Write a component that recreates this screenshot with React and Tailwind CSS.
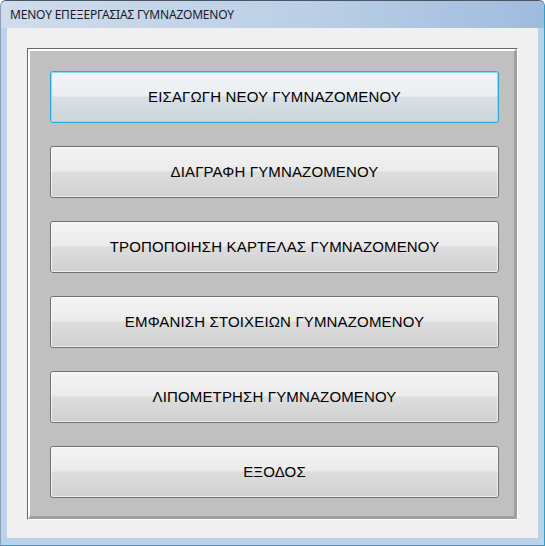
const ITEMS = [
  'ΕΙΣΑΓΩΓΗ ΝΕΟΥ ΓΥΜΝΑΖΟΜΕΝΟΥ',
  'ΔΙΑΓΡΑΦΗ ΓΥΜΝΑΖΟΜΕΝΟΥ',
  'ΤΡΟΠΟΠΟΙΗΣΗ ΚΑΡΤΕΛΑΣ ΓΥΜΝΑΖΟΜΕΝΟΥ',
  'ΕΜΦΑΝΙΣΗ ΣΤΟΙΧΕΙΩΝ ΓΥΜΝΑΖΟΜΕΝΟΥ',
  'ΛΙΠΟΜΕΤΡΗΣΗ ΓΥΜΝΑΖΟΜΕΝΟΥ',
  'ΕΞΟΔΟΣ',
];

function MenuButton({ label, focused }) {
  const shell = focused
    ? 'border-[#2aa7de] bg-[linear-gradient(to_bottom,#f1f4f6_0%,#eaeff2_48%,#d8e0e4_50%,#ccd6db_100%)]'
    : 'border-[#707070] bg-[linear-gradient(to_bottom,#f3f3f3_0%,#ebebeb_48%,#dddddd_50%,#d0d0d0_100%)]';
  return (
    <button
      className={`h-[52px] w-full rounded-[3px] border ${shell} text-[15px] tracking-[0.15px] text-black`}
      style={{ fontFamily: '"Liberation Sans", Arial, sans-serif' }}
    >
      <div className={`flex h-full w-full items-center justify-center rounded-[2px] border pt-[1px] ${focused ? 'border-[#8fd8f6]' : 'border-[#fcfcfc]/70'}`}>
        {label}
      </div>
    </button>
  );
}

export default function App() {
  return (
    <div
      className="flex h-[546px] w-[545px] flex-col overflow-hidden rounded-t-[6px] border-t border-l border-t-[#4a5666] border-l-[#8aa0b8] border-r border-r-[#2f9ec4] border-b border-b-[#2f9ec4] bg-[#bad2ec]"
      style={{ fontFamily: '"Segoe UI", "Noto Sans", "DejaVu Sans", sans-serif' }}
    >
      {/* title bar */}
      <div className="flex h-[27px] shrink-0 items-center bg-[linear-gradient(to_right,#cfdcec,#b9cee6_60%,#9fbbdd)] pl-[9px]">
        <span className="text-[12px] tracking-[-0.2px] text-[#1a1a2a]">ΜΕΝΟΥ ΕΠΕΞΕΡΓΑΣΙΑΣ ΓΥΜΝΑΖΟΜΕΝΟΥ</span>
      </div>

      {/* client area */}
      <div className="mx-[6px] mb-[7px] flex flex-1 flex-col bg-[#f0f0f0] px-[20px] pt-[20px] pb-[18px]">
        <div className="flex flex-1 flex-col border-t border-l border-t-[#696969] border-l-[#696969] border-r border-b border-r-white border-b-white">
          <div className="flex flex-1 flex-col border-t-2 border-l-2 border-t-white border-l-white border-r-[3px] border-b-[3px] border-r-[#a0a0a0] border-b-[#a0a0a0] bg-[#c0c0c0] pt-[20px] pl-[20px] pr-[15px]">
            <div className="flex flex-col gap-[23px]">
              {ITEMS.map((label, i) => (
                <MenuButton key={label} label={label} focused={i === 0} />
              ))}
            </div>
          </div>
        </div>
      </div>
    </div>
  );
}
